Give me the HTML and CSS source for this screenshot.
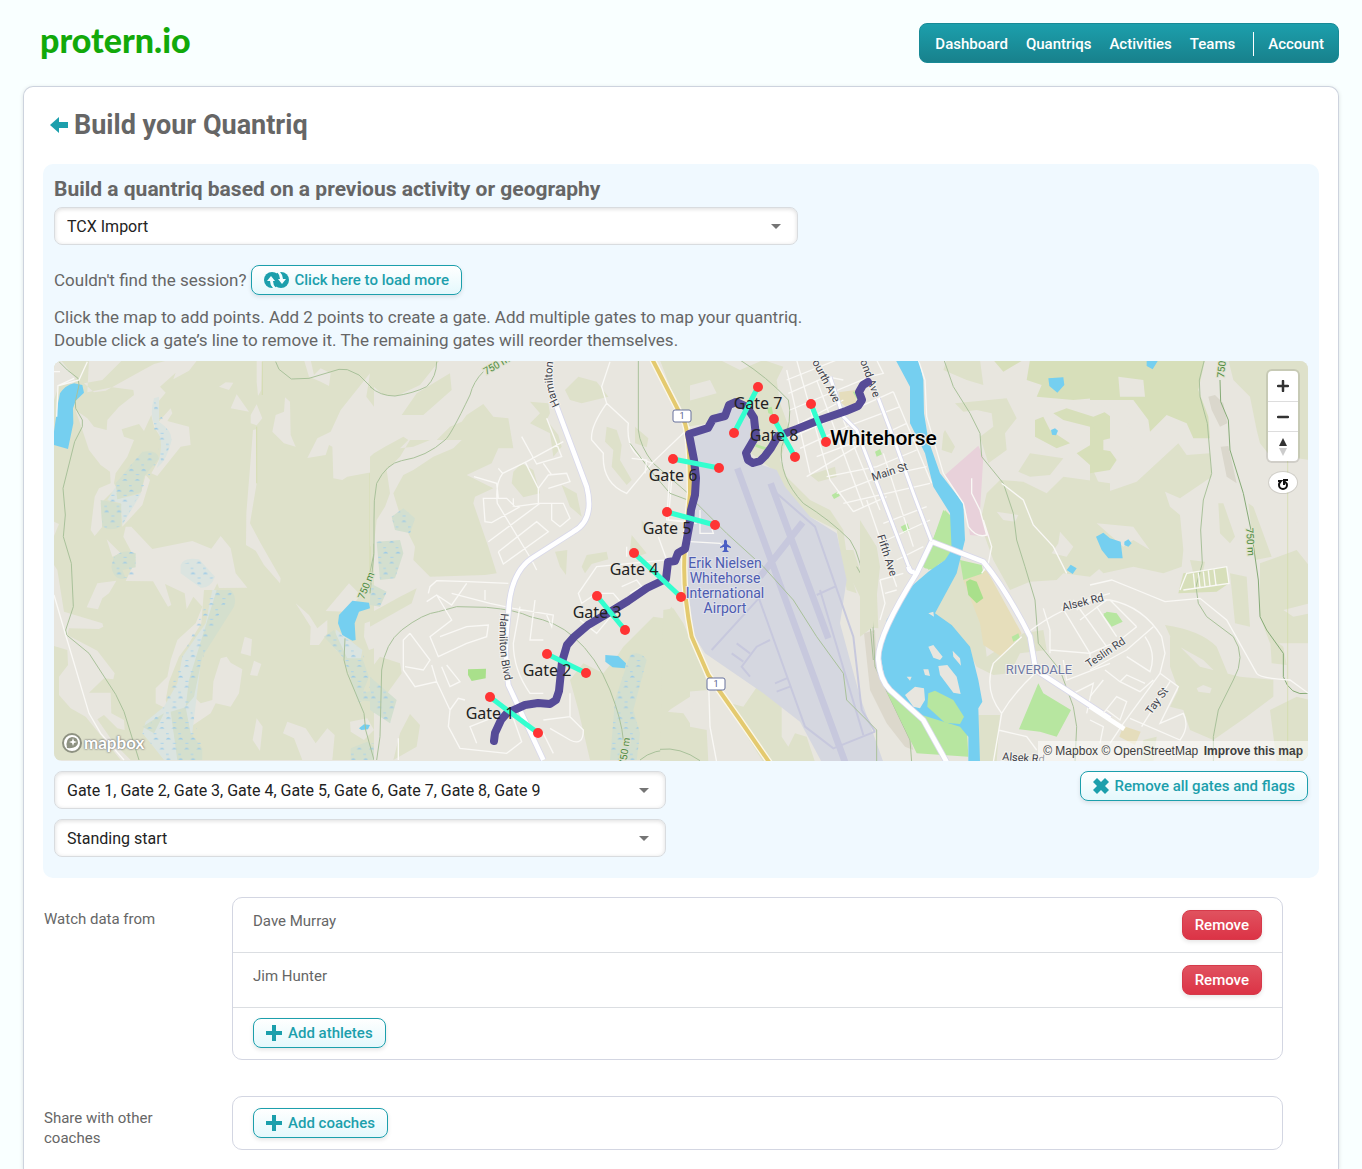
FILE: index.html
```html
<!DOCTYPE html>
<html lang="en">
<head>
<meta charset="utf-8">
<meta name="viewport" content="width=device-width, initial-scale=1">
<title>Build your Quantriq - protern.io</title>
<link rel="stylesheet" href="styles.css">
</head>
<body>
<header class="site-header">
  <a class="logo" href="#">protern.io</a>
  <nav class="main-nav" aria-label="Main">
    <a href="#">Dashboard</a>
    <a href="#">Quantriqs</a>
    <a href="#">Activities</a>
    <a href="#">Teams</a>
    <a class="account" href="#">Account</a>
  </nav>
</header>

<main class="card">
  <div class="title-row">
    <a class="back" href="#" aria-label="Back"><svg width="18" height="16" viewBox="0 0 18 16"><path d="M0 8 9 0V5H18V11H9V16Z"/></svg></a>
    <h1>Build your Quantriq</h1>
  </div>

  <section class="builder">
    <h2><label for="activity">Build a quantriq based on a previous activity or geography</label></h2>
    <div class="select wide"><select id="activity"><option>TCX Import</option></select></div>

    <div class="load-row">
      <span>Couldn't find the session?</span>
      <button class="btn" type="button">
        <svg width="25" height="16" viewBox="0 0 25 16"><circle cx="8" cy="8" r="8" fill="currentColor"/><circle cx="17" cy="8" r="8" fill="currentColor"/><path d="M3 9 7 4 11 9H9Q9 13 12 16H9Q6 13 6 9ZM22 7 18 12 14 7H16Q16 3 13 0H16Q19 3 19 7Z" fill="#f6feff"/></svg>
        Click here to load more</button>
    </div>

    <p class="help">Click the map to add points. Add 2 points to create a gate. Add multiple gates to map your quantriq.<br>Double click a gate’s line to remove it. The remaining gates will reorder themselves.</p>

    <div class="map">
      <svg class="map-canvas" viewBox="54 361 1254 400" preserveAspectRatio="xMidYMid slice" role="img" aria-label="Map of Whitehorse with gates">
        <defs>
          <pattern id="marsh" width="37" height="62" patternUnits="userSpaceOnUse"><path d="M2 22Q10 12 18 22ZM20 52Q28 42 36 52Z" fill="#9ac9e8"/><path d="M24 34h9M3 5h8" stroke="#a9d2ea" stroke-width="3"/></pattern>
          <path id="hamilton-north" d="M560 405Q547 382 556 350"/>
          <path id="hamilton-south" d="M501 613Q496 650 508 692"/>
        </defs>
        <rect class="land" x="54" y="361" width="1254" height="400"/>

        <!-- western forest -->
        <svg x="54" y="360" width="320" height="400" viewBox="0 0 960 1200" overflow="visible">
          <path class="wood" d="M0 0H960V1200H0Z"/>
          <path class="land" d="M0 0H20L65 55 60 70 15 75 0 120ZM105 0H205L145 60 90 70 120 97 155 92 240 45 300 12 345 0H430L405 32 358 58 365 38 318 80 335 98 300 140 310 190 350 145 355 160 340 183 405 200 410 255 380 260 310 348 292 340 320 290 325 240 300 200 292 165 270 213 255 192 203 208 210 230 240 240 220 290 185 340 180 370 195 400 175 395 140 430 145 500 122 528 110 510 122 410 135 385 170 370 168 335 140 315 105 270 80 195 64 150 100 175 120 200 158 210 160 180 195 140 240 105 238 90 175 82 100 97Z"/>
          <path class="land" d="M275 345 288 360 265 435 205 500 202 430 260 400ZM215 500 232 500 295 567 415 543 472 566 500 528 530 565 545 640 580 683 495 684 490 670 480 690 450 690 442 790 405 850 375 890 345 965 335 1020 345 1050 305 1030 305 985 340 950 350 900 370 840 425 790 445 740 418 710 398 748 392 700 333 672 352 735 342 740 297 664 215 663 245 600 232 575 208 530ZM158 538 200 580 175 590ZM187 662 130 670 98 742 132 748 145 715 165 700ZM0 485 15 492 0 528ZM0 615 10 630 30 755 145 790 148 800 135 807 45 805 40 825 130 872 182 940 178 958 150 955 105 998 170 998 172 1060 210 1080 212 1110 190 1105 150 1065 130 1078 180 1150 230 1200H200L95 1070 50 1045 15 1005 15 950 42 915 40 870 0 858ZM625 0H608V65L612 108 622 90ZM608 133 590 165V190L608 196 625 175ZM495 80 515 67 538 68 525 90ZM548 103 585 155 530 145ZM597 210 606 208 608 370 588 490 620 550 680 655 678 670 630 615 605 572 576 555 577 460ZM693 112 708 125 710 225 725 260 690 250 655 215 665 165 690 155ZM948 40 937 110 960 140V335L880 350 865 360 838 355 835 260 825 255 815 285 760 294 790 235 830 215 860 150ZM750 0H770L780 45 800 25 830 40 825 78 800 65 765 50ZM500 895 518 890 530 908 565 928 555 1000 530 1040 485 1030 470 1060 410 1100 405 1080 420 1010 440 1030 475 1020 478 965ZM572 830 594 838 590 888 560 880ZM600 902 622 912 610 948 588 945ZM608 1075 626 1100 618 1173 596 1140ZM700 1085 755 1105 785 1150 820 1105 842 1125 835 1200H745L720 1135 687 1120ZM725 730 765 765 790 805 820 780 820 820 795 855 768 855 770 800ZM885 670 920 705 880 755 815 753ZM960 780 932 790 930 830 945 870 960 865ZM888 1085 940 1075 960 1110 930 1140 890 1115Z"/>
          <path fill="#dbe4e0" d="M300 115Q285 160 305 205 335 240 308 325 340 300 353 240 353 210 315 185V110ZM185 380 160 420 200 430 205 495 262 400 190 418ZM380 615Q390 590 435 598L483 650Q470 685 440 683L380 640ZM475 690 455 790 385 890 370 970 330 1040 275 1085 265 1120 290 1150 330 1200H405L445 870 485 780 490 690ZM845 808 925 870 920 900 880 895 845 870Z"/>
          <path fill="#d4dfcd" d="M265 275Q310 268 315 295L270 350 262 395 190 418 185 370ZM140 420 202 432 200 500Q170 515 145 500ZM180 590Q210 565 245 580V622L205 630 215 655Q180 665 172 620ZM488 690H530Q550 710 540 740L445 890 420 1010 395 1040 405 960ZM350 1055 395 1042 410 1120 445 1165V1200H370ZM265 1100 330 1060 300 1120ZM840 810 810 830 870 895 910 1020 960 1025V990L925 1000 945 950 925 895 880 895ZM890 1165 940 1145 960 1160V1200H890Z"/>
          <path fill="url(#marsh)" d="M265 275Q310 268 315 295L205 495Q170 515 145 500V440L190 360ZM300 115 353 240 325 320 300 205ZM180 590Q210 565 245 580V650Q180 665 172 620ZM380 615 435 598 483 650 440 683ZM475 690H540L485 780 405 1020 445 1165V1200H330L265 1120 330 1040 385 890ZM840 810 925 870 960 1000V1025H910L870 895 810 830ZM890 1165 960 1150V1200H890Z"/>
          <path class="water" d="M60 70 85 75 90 98 65 122 57 145 58 190 42 267 0 255V215L12 130 18 100Q35 75 60 70ZM895 722 945 728 948 745 915 755 902 790 905 840 895 842 865 825 852 790 855 765ZM915 1105 930 1093 948 1095 942 1108 922 1110Z"/>
          <path class="contour" d="M15 5 40 30 72 55 75 75 64 125 65 145 85 180 85 200 62 245 27 385 34 465 28 530 52 610 58 740 35 810 38 825 105 880 185 1003 210 1055 255 1200M665 5 675 28 712 57 765 55 855 28 880 29 915 45 960 90M960 410V580L945 650M873 835 870 900 880 940 930 1060 935 1110 960 1200"/>
          <path class="street" d="M0 705 35 825 105 1060 140 1120 210 1200M8 170 12 77 60 55M100 5 75 60 15 77M0 35 18 35"/>
          <path d="M625 5V105M608 200V370M948 340V700" stroke="#d0dba6" stroke-width="2" fill="none"/>
        </svg>

        <!-- Hamilton Blvd and the western suburbs -->
        <svg x="370" y="360" width="320" height="400" viewBox="0 0 960 1200" overflow="visible">
          <path class="land" d="M12 0H960V1200H12Z"/>
          <path class="wood" d="M0 0H210L150 75 80 108 40 105 0 70ZM240 40 245 90 200 130 160 165 95 165 140 100ZM12 280 45 260 100 230 115 240 90 265 130 260 180 240 275 240 250 265 190 290 130 330 100 345 70 400 95 480 135 560 130 600 180 650 345 645 380 640 355 560 310 430 315 410 370 385 290 345 365 310 385 265 430 265 415 175 370 170 340 132 290 165 275 185 240 200 200 240 120 240 90 290 50 330 60 400 45 440 20 480 12 550 0 560V290ZM90 710 140 685 125 730 0 800V760ZM30 890 90 910 95 940 30 1030 0 1050V930ZM120 1062 150 1095 140 1160 70 1200 90 1120ZM480 125 535 130 540 160 530 180 565 225 575 260 550 290 540 220 480 190 510 160ZM585 90 625 50 680 65 715 110 635 130 600 120ZM455 310 490 330 510 400 460 412 425 370 430 335ZM575 375 620 400 635 470 600 440ZM710 200 740 210 755 255 750 300 785 360 770 375 725 320 730 270 705 245ZM795 200 835 235 830 262 795 250ZM870 0H960V190L900 80ZM555 575 592 570 588 645 570 620ZM650 585 710 575 715 598 665 612 645 640 635 620ZM905 740 930 800 960 830V1200H660L625 1050 600 960 640 910 700 940 740 890 760 860 850 770 880 775ZM785 525 830 580 800 590 780 570Z"/>
          <path class="land" d="M960 1010 890 1055 940 1060 960 1090Z"/>
          <path fill="#d3dfcf" d="M20 545 90 540 100 580 75 655 30 660ZM0 670 50 695 30 740 0 735ZM0 950 80 1020 60 1090 0 1050ZM780 885Q810 870 830 900L790 1050 810 1120 800 1200H720L735 1020ZM65 470 100 445 135 475 120 520 75 510Z"/>
          <path fill="url(#marsh)" d="M20 545 90 540 100 580 75 655 30 660ZM0 670 50 695 30 740 0 735ZM0 950 80 1020 60 1090 0 1050ZM780 885Q810 870 830 900L790 1050 810 1120 800 1200H720L735 1020ZM65 470 100 445 135 475 120 520 75 510Z"/>
          <path class="water" d="M706 885 745 888 768 910 765 925 728 922 706 905Z"/>
          <path fill="#a9e08b" d="M294 928 348 926 347 955 305 963 294 945Z"/>
          <path class="contour" d="M340 35Q310 65 300 105 240 230 225 240 170 290 95 302 50 310 20 370 10 420 12 480L12 580 0 700M200 5Q200 50 170 80 130 100 75 108 30 108 0 80M20 1200 30 1130 35 930Q45 850 95 810 160 760 205 755L260 740 350 742Q440 750 480 770 560 785 610 830 680 890 720 990 755 1080 760 1140M810 1200Q850 1165 920 1170L960 1180M805 0V210Q810 260 850 310L960 405"/>
          <path class="street" d="M312 350 380 370 385 415M385 325 398 340 470 305 580 245M398 340Q375 370 382 430L485 600M455 230 500 312 575 290 530 175M465 305 505 385V430L435 440 410 415H340L345 485 365 488 450 440M505 385 535 345 590 340 600 365 535 385M505 430 580 430 600 475 570 500 545 480V430M355 545 510 430M385 575 500 485 535 515 400 612 385 575M545 345 520 310M430 415V440M485 600 500 630M175 700 180 680 200 662 295 665 415 670M170 725 200 705 245 735 290 670M200 705 245 780 180 830 205 890 290 850 350 830 355 795 290 800 210 830M120 820 180 900 160 930 105 920M120 820 100 840V930L135 980 200 965 185 915M245 700 360 730 430 745 550 765 545 800 530 765M345 690V720M450 740 430 850Q430 930 480 1000H520M495 720 480 840 520 840M215 920 240 980 270 965 230 915M200 965 240 1050 235 1100 270 1165 410 1180 455 1145 430 1075M240 1050 265 1015 285 1020M400 1060 300 1100 320 1150M85 1135 85 1200M520 1080 600 1070 640 1110Q640 1160 600 1140L540 1105M600 1070V1000M520 1120 550 1180M720 5 695 80 710 130Q660 200 665 240L700 280Q695 370 770 400L845 310 960 200M710 130 775 190Q765 290 850 310M905 360 895 480 960 485M865 530 890 600 680 620 625 700 635 730 680 700 730 700 755 730 680 820 630 780M770 560V590M755 680 800 660 815 680 780 700"/>
          <path class="road-edge" d="M540 0Q535 70 560 140L650 380Q675 480 610 515L485 595Q420 640 415 760 400 880 415 975L520 1200"/>
          <path class="road" d="M540 0Q535 70 560 140L650 380Q675 480 610 515L485 595Q420 640 415 760 400 880 415 975L520 1200"/>
        </svg>

        <!-- ground south of the airport -->
        <svg x="660" y="550" width="330" height="212" viewBox="0 0 990 636" overflow="visible">
          <path class="wood" d="M10 180 40 175 70 220 130 360 145 420 80 425 20 490 65 495 90 530 140 540 145 636H0ZM290 412 365 465V560L385 590 405 550 440 560 465 636H310L195 455 250 470ZM530 0 580 0 600 60 650 110 655 235 610 230 605 150Z"/>
          <path class="land" d="M80 470 110 450 140 460 125 490Z"/>
          <path fill="#dcd8cc" d="M612 250 645 240 650 350 690 430 740 520 760 600 735 590 680 520 630 420Z"/>
          <path class="contour" d="M0 598Q60 590 120 632M590 50 635 130 640 250 645 350 750 570 755 636"/>
        </svg>

        <!-- northern shore, downtown and airport -->
        <svg x="630" y="360" width="330" height="210" viewBox="0 0 990 630" overflow="visible">
          <path class="wood" d="M90 0H270L330 30 400 0 460 20 440 60 450 130 480 210 450 300 470 350 540 420 600 450 640 510 655 620 680 700 650 690 620 510 540 470 445 400 430 330 240 190 170 200 150 130 260 100 240 60 130 90Z"/>
          <path class="wood" d="M540 345 615 320 620 350 565 365ZM35 480 50 500 35 510Z"/>
          <path fill="#e5ddbc" d="M627 97 675 90 680 130 645 138 630 125Z"/>
          <path fill="#b7e6a0" d="M668 95 690 95 685 125ZM735 275 750 267 756 283 740 290ZM605 405 622 395 630 407 612 417ZM812 500 832 490 840 510 822 518ZM945 450 975 480V560L910 630 885 625 865 610 900 560ZM412 145 425 140 430 165 415 160ZM378 252 408 262 405 270 376 260Z"/>
          <path class="apron" d="M178 220 230 200 270 150 310 125 335 135 380 220 350 300 440 330 465 380 540 470 620 520 650 660 630 790 690 1010 760 1206H575L510 1085 400 1000 225 880 175 800 165 600Z"/>
          <path fill="none" stroke="#c7c8dd" stroke-width="20" d="M322 325 645 1206M422 370 595 835M518 487 390 650"/>
          <path fill="none" stroke="#c7c8dd" stroke-width="6" d="M440 400 555 500 670 830 695 1050 735 1115M385 710 525 1100 610 1165 735 1115M570 690 700 1125M560 705 615 680M400 700 245 870M420 840 380 860 335 920 360 950M320 850 360 880M305 880 340 905M435 970 470 955M440 995 480 980"/>
          <path class="contour" d="M330 0Q410 50 475 120 490 180 455 260 445 350 520 430 600 480 660 540 700 600 700 700L720 790 730 900M0 250 60 330 120 400 200 430 290 520 400 620 490 720 560 830 640 940 650 1020 740 1110V1210"/>
          <path class="street" d="M470 60 620 0M475 100 590 50 640 60M480 150 720 50M500 195 640 120M490 230 790 95M510 265 650 200 810 140M530 350 680 260 830 190M560 290 720 230 850 220M590 350 740 320 860 270M620 400 750 350 890 320M640 430 900 370M670 455 770 410M760 490 890 440M770 540 900 480M800 600 880 560M470 30 540 340M500 0 600 360 670 455M560 60 700 440M640 180 750 450M790 95 905 370M760 280 850 560M720 50 760 40 740 0M5 295 50 300 45 340M120 330 110 480 200 490M210 450V520H250L240 490M180 545 270 550 290 570"/>
          <path class="road-edge thin" d="M600 50 640 170 680 210 840 630M745 115 800 260 850 400 905 545"/>
          <path class="road thin" d="M600 50 640 170 680 210 840 630M745 115 800 260 850 400 905 545"/>
          <path class="street" d="M235 945 240 1100 260 1206"/>
          <path class="hwy-edge" d="M68 0 165 190Q180 240 180 400L165 560Q155 680 185 830L235 945 330 1080 420 1210"/>
          <path class="hwy" d="M68 0 165 190Q180 240 180 400L165 560Q155 680 185 830L235 945 330 1080 420 1210"/>
        </svg>

        <!-- Yukon River and the east bank -->
        <svg x="860" y="360" width="250" height="402" viewBox="0 0 750 1206" overflow="visible">
          <path class="wood" d="M260 0H360L370 75 320 60 250 30ZM285 130 440 115 470 175 435 220 440 270 385 310 360 230 400 200 395 160 350 150 310 155ZM255 210 285 260 275 280 245 270 250 220ZM475 335 510 280 610 295 570 345 510 350ZM380 400 420 360 490 365 560 400 610 350 750 370V600L690 650 610 640 590 660 510 665 450 690 400 600 360 490ZM215 755 300 590 310 650 370 800 380 890 490 820 550 810 560 870 480 880 450 940 400 945 350 920 320 860ZM355 1065H420L410 1206H355ZM0 480 50 560 60 620 40 800 0 830Z"/>
          <path class="land" d="M410 455 475 465 465 485 430 480ZM600 515 640 560 620 590 575 580 595 550Z"/>
          <path fill="#d7dfba" d="M400 0H490L430 35ZM510 0H750V110L640 120 530 110 545 75 500 60ZM525 180 550 170 570 210 630 250 590 265 525 230ZM580 160 620 145 700 170 750 150V330L690 315 650 280 700 250 690 200 610 180Z"/>
          <path fill="#e8d1da" d="M355 257 370 290 360 455 390 530 330 525 315 440 255 345Z"/>
          <path fill="#e6debb" d="M310 660 380 630 485 820 425 890 370 855 360 790Z"/>
          <path fill="#b7e6a0" d="M300 600 365 615 370 640 310 660ZM250 450 275 480V590L205 630 200 600 215 550ZM80 995 185 1060 320 1090 325 1190 170 1180ZM535 970 550 1000 633 1050 590 1130 540 1115 477 1108ZM730 760H750V790ZM455 830 475 820 480 835 460 845Z"/>
          <path class="water" d="M107 0H177L190 60 192 160 205 240 240 340 310 430 315 540 290 640 225 760 275 795 330 860 355 960 367 1025 355 1045 360 1206H325V1130L300 1100 185 1065 130 1030 75 960 60 880 80 780 130 700 205 635 255 600 275 570 270 460 220 380 195 280 150 190V80Z"/>
          <path class="land" d="M205 860 220 855 248 890 240 900 220 893ZM278 872 300 895 303 917 280 890ZM235 918 262 915 290 950 302 1002 280 998 240 945ZM190 928 205 928 210 948 195 945ZM140 950H155L150 962ZM135 1005 165 980 192 985 195 1020 180 1045 160 1040ZM205 760 220 755 222 770Z"/>
          <path fill="#b7e6a0" d="M205 1000 225 992 280 1020 312 1070 300 1092 255 1088 202 1040Z"/>
          <path class="water" d="M565 55 610 52 613 75 592 98 568 78ZM573 210 585 205 594 212 588 226 576 224ZM707 530 725 520 760 545V600L730 590ZM620 630 632 614 650 625 638 642Z"/>
          <path fill="#a9e08b" d="M318 665 330 658 350 665 370 715 350 730 325 705Z"/>
          <path class="contour" d="M252 0 280 80 330 160 360 220 365 290 430 370 460 460 470 540 495 620 525 720 535 850 600 930 640 1040 650 1100 645 1206"/>
          <path class="street" d="M175 0 195 60 200 170 250 340 310 430 325 500Q350 535 380 525L360 450 335 400V355M370 480 395 560 385 610 365 640M425 370 490 420 520 495 580 560 620 640M500 820Q600 740 750 700M485 830 400 910Q370 990 425 1060L400 1206M425 1060Q460 1000 525 940M550 745 570 810V880M605 740 690 880M640 720 740 860M570 870 690 880 690 920M610 900 620 960 750 910M650 750 720 700M660 780 740 720M415 1110 500 1130 530 1170M640 1000 700 970 680 1060M20 420 110 680M60 660 130 640M60 660 75 730 60 780M75 700 110 690"/>
          <path class="road-edge" d="M215 545 170 640Q50 830 55 900 60 960 90 990L190 1080 260 1206M165 635Q150 640 145 620M215 545 370 605Q440 690 510 830L527 930 750 1075"/>
          <path class="road" d="M215 545 170 640Q50 830 55 900 60 960 90 990L190 1080 260 1206M165 635Q150 640 145 620M215 545 370 605Q440 690 510 830L527 930 750 1075"/>
        </svg>

        <!-- eastern hills and Riverdale -->
        <svg x="1090" y="360" width="220" height="402" viewBox="0 0 660 1206" overflow="visible">
          <path class="wood" d="M140 365 265 250 290 285 360 280 365 350 270 415 225 395 240 440 270 465 280 570 275 620 220 640 130 620 40 640 0 600V310L40 400ZM415 0H660V300L590 290 550 300 510 250 500 210 480 110 430 60ZM385 430 400 430 435 530 420 550 390 520ZM475 430 490 440 545 590 495 600ZM510 610 620 570 660 620V730L580 750 610 770 660 760V850L540 850 510 770ZM420 640 470 650 480 800 435 790ZM225 795Q330 810 380 860L415 945 380 940 340 900 250 850ZM240 830 330 920 450 950 550 960V1010L470 1070 370 1140 300 1110 280 1050 240 1040 265 990 240 920ZM540 1050 620 1010 660 1020V1206H560ZM300 600 345 605 340 630 310 640ZM540 830 580 860 590 915 545 910ZM160 1140 200 1130 190 1206H150Z"/>
          <path fill="#d7dfba" d="M0 0H345L325 90 355 170 360 235 310 235 290 190 230 165 180 215 175 180 130 120 0 120ZM0 190 30 230 80 300 60 330 0 340ZM280 640 410 620 417 670 380 695 265 700Z"/>
          <path class="land" d="M85 50 160 60 165 110 90 110ZM0 125 90 155 130 210 90 190ZM40 240 80 230 125 260 150 280 140 300 100 280 40 270ZM320 985 340 975 365 985 360 1000 325 995ZM605 455 645 445 640 470 620 490ZM20 490 130 500 180 570 130 540 100 560Z"/>
          <path fill="#dad7cc" d="M355 110 375 105 400 130 412 190 390 200 365 150ZM392 260 415 258 440 370 410 350Z"/>
          <path fill="#b7e6a0" d="M40 765 50 755 80 760 98 785 65 800Z"/>
          <path fill="#e5ddbc" d="M100 1098 152 1115 135 1155 88 1130Z"/>
          <path class="water" d="M170 0H205L188 28 170 18ZM18 530 40 518 60 535 92 545 98 595 55 595 35 570ZM103 545 115 538 125 550 115 560 103 555Z"/>
          <path class="contour" d="M343 0 328 60 330 110 352 190 365 340 340 420 332 510 337 610 318 680 325 730 350 770 430 830Q470 890 430 960L385 1050 370 1130V1206"/>
          <path class="contour strong" d="M390 60 392 125 415 180 420 270 460 400 485 520 505 660 510 770 530 810 580 880V950Q600 1010 655 1000"/>
          <path fill="none" stroke="#d0dba6" stroke-width="2" d="M593 300V1206"/>
          <path class="street" d="M0 675 65 660 140 690 225 725 330 715 410 780 500 940Q510 955 600 960L655 1000M0 720H60Q160 740 215 830L225 880 210 940 265 980 210 1090 280 1060Q300 1100 270 1140L120 1075M190 800 110 870 0 930M140 800 90 840 0 880M165 830Q200 880 180 935L110 890M210 940 100 1090 60 1150M45 930 90 965 150 995 190 960M240 965 155 1100M90 965 110 945 165 970M0 1010 40 960M40 1060 80 1010 110 1025 90 1080 50 1050M0 1080 40 1100 30 1150M270 690 290 640 410 620 417 670 280 690M310 640 315 685M325 638 330 683M340 635 345 680M355 632 360 678M372 629 378 676M20 740 80 830M60 720 140 800"/>
          <path class="road" d="M0 1040 103 1107"/>
        </svg>

        <!-- highway shields -->
        <g class="shield">
          <rect x="673" y="410" width="18" height="12" rx="2"/><text x="682" y="419">1</text>
          <rect x="707" y="678" width="18" height="12" rx="2"/><text x="716" y="687">1</text>
        </g>

        <!-- place and road names -->
        <g class="road-name">
          <text><textPath href="#hamilton-north">Hamilton</textPath></text>
          <text><textPath href="#hamilton-south">Hamilton Blvd</textPath></text>
          <text transform="translate(812 362) rotate(62)">ourth Ave</text>
          <text transform="translate(860 361) rotate(70)">ond Ave</text>
          <text transform="translate(873 481) rotate(-18)">Main St</text>
          <text transform="translate(877 536) rotate(72)">Fifth Ave</text>
          <text transform="translate(1063 611) rotate(-14)">Alsek Rd</text>
          <text transform="translate(1089 668) rotate(-34)">Teslin Rd</text>
          <text transform="translate(1151 715) rotate(-54)">Tay St</text>
          <text transform="translate(1002 760) rotate(4)">Alsek Rd</text>
        </g>
        <g class="height-name">
          <text transform="translate(486 375) rotate(-30)">750 m</text>
          <text transform="translate(364 600) rotate(-68)">750 m</text>
          <text transform="translate(626 766) rotate(-82)">750 m</text>
          <text transform="translate(1224 378) rotate(-84)">750</text>
          <text transform="translate(1246 528) rotate(86)">750 m</text>
        </g>
        <text class="district" x="1039" y="674">RIVERDALE</text>
        <path d="M724 541Q725 538 727 541V544L731 547V548L727 547V550L729 552H722L724 550V547L720 548V547L724 544Z" fill="#4b5fc4"/>
        <g class="airport-name">
          <text x="725" y="568">Erik Nielsen</text><text x="725" y="583">Whitehorse</text><text x="725" y="598">International</text><text x="725" y="613">Airport</text>
        </g>

        <!-- recorded track -->
        <path fill="none" stroke="#564b97" stroke-width="8" stroke-linecap="round" stroke-linejoin="round" d="M494 741 495 733 501 720 507 713 525 705 538 703 550 704 556 700 559 691 562 662 567 645 574 637 588 625 610 612 628 601 647 588 666 579 668 562 675 561 678 553 685 549 690 522 691 510 695 495 696 478 694 460 689 434 708 428 713 419 725 416 729 405 736 402 747 407 754 418 756 436 746 453 748 460 753 463 760 461 765 456 771 448 778 436 797 429 817 421 846 411 858 406 862 400 859 392 863 385 868 382"/>
        <text class="city" x="830" y="445">Whitehorse</text>

        <g class="gate-lines">
          <path d="M490 697 538 733M547 654 586 673M597 596 625 630M634 553 681 597M667 512 715 525M673 459 719 468M758 387 734 433M774 419 795 457M811 404 826 442"/>
        </g>
        <g fill="#ff3434">
          <circle cx="490" cy="697" r="5"/><circle cx="538" cy="733" r="5"/><circle cx="547" cy="654" r="5"/><circle cx="586" cy="673" r="5"/><circle cx="597" cy="596" r="5"/><circle cx="625" cy="630" r="5"/><circle cx="634" cy="553" r="5"/><circle cx="681" cy="597" r="5"/><circle cx="667" cy="512" r="5"/><circle cx="715" cy="525" r="5"/><circle cx="673" cy="459" r="5"/><circle cx="719" cy="468" r="5"/><circle cx="758" cy="387" r="5"/><circle cx="734" cy="433" r="5"/><circle cx="774" cy="419" r="5"/><circle cx="795" cy="457" r="5"/><circle cx="811" cy="404" r="5"/><circle cx="826" cy="442" r="5"/>
        </g>
        <g class="gate-names">
          <text x="490" y="719">Gate 1</text><text x="547" y="676">Gate 2</text><text x="597" y="618">Gate 3</text><text x="634" y="575">Gate 4</text><text x="667" y="534">Gate 5</text><text x="673" y="481">Gate 6</text><text x="758" y="409">Gate 7</text><text x="774" y="441">Gate 8</text>
        </g>
      </svg>

      <a class="mapbox" href="#"><svg width="22" height="22" viewBox="0 0 22 22"><circle cx="11" cy="11" r="9" fill="#fff" stroke="#8e9282" stroke-width="2"/><path d="M6 16Q4 6 11 5 17 5 17 11 16 17 6 16Z" fill="#8e9282"/><path d="M12 6 13 9 16 10 13 11 12 14 11 11 8 10 11 9Z" fill="#fff"/></svg>mapbox</a>
      <div class="map-zoom">
        <button type="button" aria-label="Zoom in"><svg width="12" height="12" viewBox="0 0 12 12"><path d="M6 1V11M1 6H11" stroke="#333" stroke-width="2.500" stroke-linecap="round"/></svg></button>
        <button type="button" aria-label="Zoom out"><svg width="12" height="12" viewBox="0 0 12 12"><path d="M1 6H11" stroke="#333" stroke-width="2.500" stroke-linecap="round"/></svg></button>
        <button type="button" aria-label="Reset bearing"><svg width="8" height="18" viewBox="0 0 8 18"><path d="M0 8 4 0 8 8Z" fill="#333"/><path d="M0 10 4 18 8 10Z" fill="#ccc"/></svg></button>
      </div>
      <button class="map-turn" type="button" aria-label="Rotate map"><svg width="12" height="12" viewBox="0 0 12 12"><path d="M1 3H4Q2 5 2 7A4 4 0 0 0 10 7Q10 5 7 3" fill="none" stroke="#111" stroke-width="2"/><path d="M6 1H11V3H8V7H6Z" fill="#111"/></svg></button>
      <div class="map-credit"><a href="#">© Mapbox</a> <a href="#">© OpenStreetMap</a> <a class="improve" href="#">Improve this map</a></div>
    </div>

    <div class="map-footer">
      <div class="gate-options">
        <div class="select"><select aria-label="Gates"><option>Gate 1, Gate 2, Gate 3, Gate 4, Gate 5, Gate 6, Gate 7, Gate 8, Gate 9</option></select></div>
        <div class="select"><select aria-label="Start type"><option>Standing start</option></select></div>
      </div>
      <button class="btn" type="button"><svg width="16" height="16" viewBox="0 0 16 16"><path d="M4 0 8 4 12 0 16 4 12 8 16 12 12 16 8 12 4 16 0 12 4 8 0 4Z" fill="currentColor"/></svg>Remove all gates and flags</button>
    </div>
  </section>

  <section class="field">
    <h3>Watch data from</h3>
    <ul class="box">
      <li class="person"><span>Dave Murray</span><button class="btn danger" type="button">Remove</button></li>
      <li class="person"><span>Jim Hunter</span><button class="btn danger" type="button">Remove</button></li>
      <li class="add"><button class="btn" type="button"><svg width="16" height="16" viewBox="0 0 16 16"><path d="M6 0H10V6H16V10H10V16H6V10H0V6H6Z" fill="currentColor"/></svg>Add athletes</button></li>
    </ul>
  </section>

  <section class="field">
    <h3>Share with other coaches</h3>
    <ul class="box">
      <li class="add"><button class="btn" type="button"><svg width="16" height="16" viewBox="0 0 16 16"><path d="M6 0H10V6H16V10H10V16H6V10H0V6H6Z" fill="currentColor"/></svg>Add coaches</button></li>
    </ul>
  </section>
</main>
</body>
</html>
```
FILE: styles.css
```css
* { box-sizing: border-box; }

body {
  margin: 0;
  min-height: 100vh;
  padding: 23px 23px 0;
  display: flex;
  flex-direction: column;
  gap: 23px;
  background: #f9ffff;
  color: #666;
  font: 16px/20px Roboto, sans-serif;
}

h1, h2, h3, p, ul { margin: 0; padding: 0; }
ul { list-style: none; }
a { color: inherit; text-decoration: none; }
svg { display: block; }

.site-header {
  display: flex;
  justify-content: space-between;
  align-items: flex-start;
  padding-left: 17px;
}

.logo {
  color: #12a90a;
  font: 900 34px/34px Lato, sans-serif;
}

.main-nav {
  display: flex;
  align-items: center;
  gap: 18px;
  height: 40px;
  padding: 1px 14px 0 15px;
  border: 1px solid #188a96;
  border-radius: 8px;
  background: linear-gradient(#1c9fac, #18818c);
  color: #fff;
  font-size: 15px;
  font-weight: 500;
}

.main-nav .account {
  padding: 2px 0 2px 14px;
  border-left: 1px solid #fff;
}

.card {
  flex: 1;
  padding: 19px 19px 17px;
  border: 1px solid #cdd3de;
  border-bottom: 0;
  border-radius: 10px 10px 0 0;
  background: #fff;
  box-shadow: 0 1px 4px rgba(0, 0, 0, .12);
}

.title-row {
  display: flex;
  align-items: center;
  gap: 6px;
  height: 38px;
  margin-bottom: 20px;
  padding-left: 7px;
}

.back { fill: #1c9fac; }

h1 { font-size: 27px; line-height: 38px; }

.builder {
  padding: 11px 11px 21px;
  border-radius: 10px;
  background: #f0f9ff;
}

h2 { font-size: 21px; line-height: 28px; margin-bottom: 4px; }

.select { position: relative; }
.select.wide { max-width: 744px; }

.select::after {
  content: "";
  position: absolute;
  top: 17px;
  right: 17px;
  border: 5px solid transparent;
  border-top-color: #757575;
  border-bottom: 0;
  pointer-events: none;
}

select {
  display: block;
  width: 100%;
  height: 38px;
  padding: 2px 40px 0 12px;
  appearance: none;
  border: 1px solid #d9dcdf;
  border-radius: 8px;
  background: #fff;
  box-shadow: inset 0 1px 4px rgba(0, 0, 0, .14);
  color: #222;
  font: 16px/20px Roboto, sans-serif;
}

.load-row {
  display: flex;
  align-items: center;
  gap: 4px;
  margin-top: 20px;
  font-size: 17px;
}

.btn {
  display: inline-flex;
  align-items: center;
  gap: 6px;
  height: 30px;
  padding: 0 12px;
  border: 1px solid #1c9fac;
  border-radius: 8px;
  background: linear-gradient(#fff, #e4f8fc);
  box-shadow: 0 2px 4px rgba(0, 0, 0, .1);
  color: #1c9fac;
  font: 500 15px/20px Roboto, sans-serif;
  white-space: nowrap;
}

.btn.danger {
  border-color: #d63a4a;
  background: linear-gradient(#e0525f, #dc3346);
  color: #fff;
}

.help {
  margin: 11px 0 9px;
  font-size: 17px;
  line-height: 23px;
}

.map {
  position: relative;
  height: 400px;
  overflow: hidden;
  border-radius: 8px;
}

.map-canvas { width: 100%; height: 100%; }

.land { fill: #e8e6df; }
.wood { fill: #dee1ca; }
.water { fill: #75cff0; }
.apron { fill: #d5d7e0; }
.contour { fill: none; stroke: #a9c19a; stroke-width: 3; }
.contour.strong { stroke: #86ab77; }
.street { fill: none; stroke: #f9f8f5; stroke-width: 4; }
.road-edge { fill: none; stroke: #d8d8ea; stroke-width: 19; }
.road { fill: none; stroke: #fff; stroke-width: 14; }
.road-edge.thin { stroke-width: 14; }
.road.thin { stroke-width: 9; }
.hwy-edge { fill: none; stroke: #fbf7e8; stroke-width: 20; }
.hwy { fill: none; stroke: #e4ca6f; stroke-width: 12; }

.map-canvas text { font-family: Roboto, sans-serif; }
.shield rect { fill: #fff; stroke: #66709c; }
.shield text { fill: #55608c; font-size: 9px; text-anchor: middle; }

.road-name, .height-name, .district, .airport-name, .city {
  paint-order: stroke;
  stroke: #f3f2ee;
  stroke-width: 2px;
}

.road-name { fill: #3d3f4a; font-size: 11px; }
.height-name { fill: #4c8a3f; font-size: 10px; stroke: #dee1ca; }
.district { fill: #6f79a5; font-size: 13px; text-anchor: middle; }
.airport-name { fill: #4d5cb0; font-size: 14px; text-anchor: middle; stroke: #e0e1ec; }
.city { fill: #000; font-size: 21px; font-weight: 500; }
.gate-lines { fill: none; stroke: #33ffcf; stroke-width: 5; }
.map-canvas .gate-names text { fill: #222; font-family: "Noto Sans", sans-serif; font-size: 16px; text-anchor: middle; }

.mapbox {
  position: absolute;
  left: 7px;
  bottom: 7px;
  display: flex;
  align-items: center;
  gap: 1px;
  color: #fff;
  font: 700 17px/22px Lato, sans-serif;
  text-shadow: 0 0 2px #777, 0 0 2px #777;
}

.map-zoom {
  position: absolute;
  top: 10px;
  right: 10px;
  width: 30px;
  border-radius: 4px;
  background: #fff;
  box-shadow: 0 0 0 2px rgba(0, 0, 0, .1);
}

.map-zoom button, .map-turn {
  display: flex;
  align-items: center;
  justify-content: center;
  width: 30px;
  height: 30px;
  padding: 0;
  border: 0;
  background: none;
}

.map-zoom button + button { border-top: 1px solid #ddd; }

.map-turn {
  position: absolute;
  top: 111px;
  right: 11px;
  width: 28px;
  height: 21px;
  padding-top: 3px;
  border-radius: 50%;
  background: #fff;
  box-shadow: 0 0 0 1px rgba(0, 0, 0, .1);
}

.map-credit {
  position: absolute;
  right: 0;
  bottom: 0;
  padding: 0 5px;
  background: rgba(255, 255, 255, .5);
  color: #404040;
  font: 12px/20px "Liberation Sans", Arial, sans-serif;
}

.improve { margin-left: 2px; font-weight: 700; }

.map-footer {
  display: flex;
  align-items: flex-start;
  justify-content: space-between;
  gap: 20px;
  margin-top: 10px;
}

.gate-options {
  flex: 0 1 612px;
  display: grid;
  gap: 10px;
}

.field {
  display: grid;
  grid-template-columns: 129px 1fr;
  column-gap: 60px;
  margin: 19px 36px 36px 0;
}

.field + .field { margin: 0 36px 0 0; }

h3 {
  padding: 12px 0 0 1px;
  font-size: 15px;
  font-weight: 400;
  line-height: 20px;
}

.box {
  border: 1px solid #d3d6e2;
  border-radius: 10px;
  font-size: 15px;
}

.box .add { display: flex; padding: 11px 20px; }

.box .person {
  display: flex;
  justify-content: space-between;
  padding: 12px 20px;
  border-bottom: 1px solid #dbdee2;
}
.person span { padding-top: 1px; }
.person + .add { padding: 10px 20px 11px; }
```
